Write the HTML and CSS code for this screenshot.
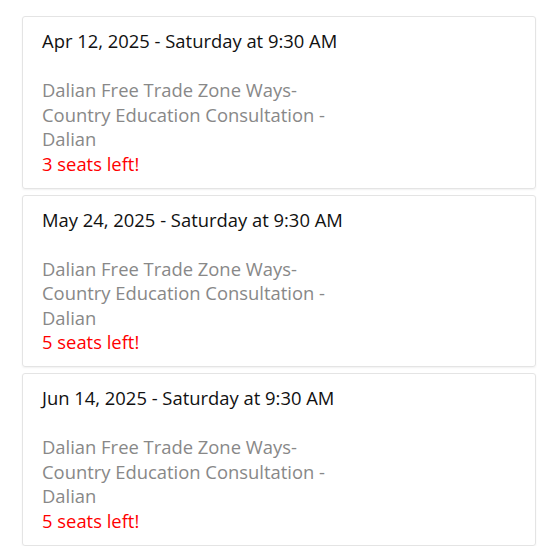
FILE: index.html
```html
<!DOCTYPE html>
<html>
<head>
<meta charset="utf-8">
<link rel="stylesheet" href="styles.css">
</head>
<body>
<div class="list">
  <div class="card">
    <div class="date">Apr 12, 2025 - Saturday at 9:30 AM</div>
    <div class="place">Dalian Free Trade Zone Ways-Country Education Consultation - Dalian</div>
    <div class="seats">3 seats left!</div>
  </div>
  <div class="card">
    <div class="date">May 24, 2025 - Saturday at 9:30 AM</div>
    <div class="place">Dalian Free Trade Zone Ways-Country Education Consultation - Dalian</div>
    <div class="seats">5 seats left!</div>
  </div>
  <div class="card">
    <div class="date">Jun 14, 2025 - Saturday at 9:30 AM</div>
    <div class="place">Dalian Free Trade Zone Ways-Country Education Consultation - Dalian</div>
    <div class="seats">5 seats left!</div>
  </div>
</div>
</body>
</html>
```
FILE: styles.css
```css
html, body {
  margin: 0;
  padding: 0;
  background: #fff;
}
body {
  font-family: "Open Sans", "Noto Sans", sans-serif;
}
.list {
  display: flex;
  flex-direction: column;
  gap: 6px;
  padding: 16px 18px 0 22px;
}
.card {
  border: 1px solid #e4e4e4;
  border-radius: 3px;
  box-shadow: 0 1px 2px rgba(0,0,0,0.06);
  padding: 12px 19px 11px 19px;
  height: 147.5px;
}
.date {
  font-size: 18.4px;
  line-height: 24px;
  color: #111;
}
.place {
  margin-top: 25px;
  font-size: 18.4px;
  line-height: 24.5px;
  color: #888;
  width: 300px;
}
.seats {
  font-size: 18.4px;
  line-height: 24.5px;
  color: #ff0000;
}
```
